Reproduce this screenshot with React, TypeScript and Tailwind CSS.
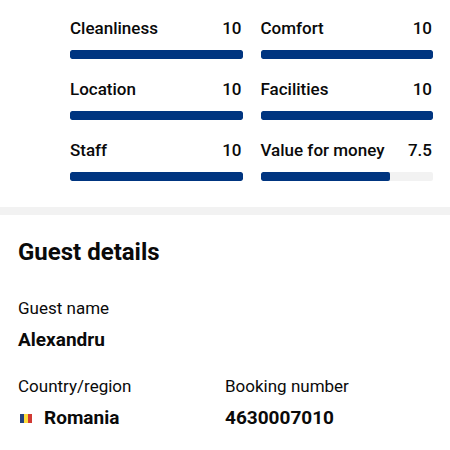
const ratings = [
  { label: "Cleanliness", score: 10 },
  { label: "Comfort", score: 10 },
  { label: "Location", score: 10 },
  { label: "Facilities", score: 10 },
  { label: "Staff", score: 10 },
  { label: "Value for money", score: 7.5 },
];

function Rating({ label, score }: { label: string; score: number }) {
  return (
    <div>
      <div className="flex justify-between pr-px text-[17px] leading-6">
        <span>{label}</span>
        <span>{score}</span>
      </div>
      <div className="mt-2.5 h-[9px] overflow-hidden rounded-xs bg-[#f2f2f2]">
        <div className="h-full rounded-xs bg-[#003580]" style={{ width: `${score * 10}%` }} />
      </div>
    </div>
  );
}

function Flag() {
  return (
    <svg className="h-[9px] w-3" viewBox="0 0 12 9" aria-hidden="true">
      <rect width="4" height="9" fill="#23427f" />
      <rect x="4" width="4" height="9" fill="#fbdc3c" />
      <rect x="8" width="4" height="9" fill="#d13a34" />
    </svg>
  );
}

export default function App() {
  return (
    <main className="min-h-screen bg-white font-['Roboto',sans-serif] text-[#0a0a0a]">
      <section className="grid grid-cols-2 gap-[18px] pt-4 pr-[17px] pb-[26px] pl-[70px] font-medium">
        {ratings.map((r) => (
          <Rating key={r.label} label={r.label} score={r.score} />
        ))}
      </section>
      <div className="h-2 bg-[#f2f2f2]" />
      <section className="px-[18px] pt-[21px]">
        <h2 className="text-2xl leading-8 font-bold">Guest details</h2>
        <dl className="mt-7 grid grid-cols-2 gap-y-5">
          <div className="col-span-2">
            <dt className="text-[17px] leading-6">Guest name</dt>
            <dd className="mt-1.5 text-[19px] leading-7 font-bold">Alexandru</dd>
          </div>
          <div>
            <dt className="text-[17px] leading-6">Country/region</dt>
            <dd className="mt-1.5 flex items-center gap-3 pl-0.5 text-[19px] leading-7 font-bold">
              <Flag />
              Romania
            </dd>
          </div>
          <div>
            <dt className="text-[17px] leading-6">Booking number</dt>
            <dd className="mt-1.5 text-[19px] leading-7 font-bold">4630007010</dd>
          </div>
        </dl>
      </section>
    </main>
  );
}
